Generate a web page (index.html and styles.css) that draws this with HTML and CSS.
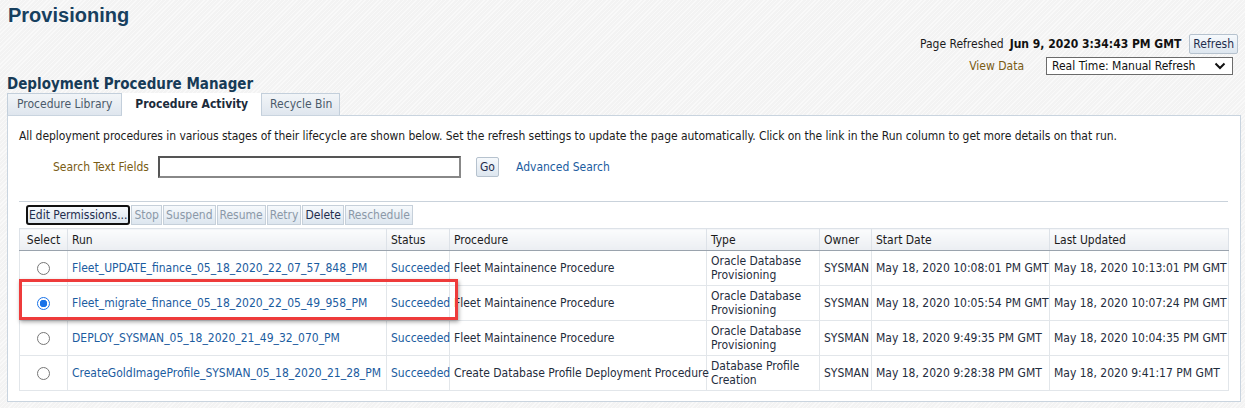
FILE: index.html
```html
<!DOCTYPE html>
<html>
<head>
<meta charset="utf-8">
<link rel="stylesheet" href="styles.css">
</head>
<body>
<div class="page">
  <h1 class="title">Provisioning</h1>
  <div class="refresh-area">
    <div class="refresh-row">
      <span class="lbl-dark">Page Refreshed</span>
      <span class="stamp">Jun 9, 2020 3:34:43 PM GMT</span>
      <button class="btn btn-refresh">Refresh</button>
    </div>
    <div class="view-row">
      <span class="lbl-brown">View Data</span>
      <div class="select">
        <span>Real Time: Manual Refresh</span>
        <svg width="12" height="8" viewBox="0 0 12 8"><path d="M1.5 1.5 L6 6 L10.5 1.5" fill="none" stroke="#111" stroke-width="2"/></svg>
      </div>
    </div>
  </div>
  <h2 class="subtitle">Deployment Procedure Manager</h2>
  <div class="tabs">
    <div class="tab">Procedure Library</div>
    <div class="tab active">Procedure Activity</div>
    <div class="tab">Recycle Bin</div>
  </div>
  <div class="panel">
    <p class="desc">All deployment procedures in various stages of their lifecycle are shown below. Set the refresh settings to update the page automatically. Click on the link in the Run column to get more details on that run.</p>
    <div class="search-row">
      <span class="lbl-brown">Search Text Fields</span>
      <div class="input"></div>
      <button class="btn btn-go">Go</button>
      <a class="link adv">Advanced Search</a>
    </div>
    <div class="sep"></div>
    <div class="toolbar">
      <button class="btn tb focus">Edit Permissions...</button>
      <button class="btn tb dis">Stop</button>
      <button class="btn tb dis">Suspend</button>
      <button class="btn tb dis">Resume</button>
      <button class="btn tb dis">Retry</button>
      <button class="btn tb">Delete</button>
      <button class="btn tb dis">Reschedule</button>
    </div>
    <div class="table-wrap">
      <table class="grid">
        <colgroup>
          <col class="c-sel"><col class="c-run"><col class="c-status"><col class="c-proc"><col class="c-type"><col class="c-owner"><col class="c-start"><col class="c-upd">
        </colgroup>
        <thead>
          <tr><th>Select</th><th>Run</th><th>Status</th><th>Procedure</th><th>Type</th><th>Owner</th><th>Start Date</th><th>Last Updated</th></tr>
        </thead>
        <tbody>
          <tr>
            <td class="sel"><span class="radio"></span></td>
            <td><a class="link">Fleet_UPDATE_finance_05_18_2020_22_07_57_848_PM</a></td>
            <td><a class="link">Succeeded</a></td>
            <td>Fleet Maintainence Procedure</td>
            <td>Oracle Database Provisioning</td>
            <td>SYSMAN</td>
            <td>May 18, 2020 10:08:01 PM GMT</td>
            <td>May 18, 2020 10:13:01 PM GMT</td>
          </tr>
          <tr>
            <td class="sel"><span class="radio on"></span></td>
            <td><a class="link">Fleet_migrate_finance_05_18_2020_22_05_49_958_PM</a></td>
            <td><a class="link">Succeeded</a></td>
            <td>Fleet Maintainence Procedure</td>
            <td>Oracle Database Provisioning</td>
            <td>SYSMAN</td>
            <td>May 18, 2020 10:05:54 PM GMT</td>
            <td>May 18, 2020 10:07:24 PM GMT</td>
          </tr>
          <tr>
            <td class="sel"><span class="radio"></span></td>
            <td><a class="link">DEPLOY_SYSMAN_05_18_2020_21_49_32_070_PM</a></td>
            <td><a class="link">Succeeded</a></td>
            <td>Fleet Maintainence Procedure</td>
            <td>Oracle Database Provisioning</td>
            <td>SYSMAN</td>
            <td>May 18, 2020 9:49:35 PM GMT</td>
            <td>May 18, 2020 10:04:35 PM GMT</td>
          </tr>
          <tr>
            <td class="sel"><span class="radio"></span></td>
            <td><a class="link">CreateGoldImageProfile_SYSMAN_05_18_2020_21_28_PM</a></td>
            <td><a class="link">Succeeded</a></td>
            <td>Create Database Profile Deployment Procedure</td>
            <td>Database Profile Creation</td>
            <td>SYSMAN</td>
            <td>May 18, 2020 9:28:38 PM GMT</td>
            <td>May 18, 2020 9:41:17 PM GMT</td>
          </tr>
        </tbody>
      </table>
      <div class="highlight"></div>
    </div>
  </div>
</div>
</body>
</html>
```
FILE: styles.css
```css
html, body { margin: 0; padding: 0; }
body {
  background-color: #f3f3f3;
  background-image: repeating-linear-gradient(135deg, rgba(255,255,255,0.5) 0 1px, rgba(0,0,0,0) 1px 3px);
  font-family: "DejaVu Sans Condensed", "DejaVu Sans", sans-serif;
  font-size: 12px;
  color: #1f2d3d;
}
.page { padding: 0 4px 0 7px; height: 408px; box-sizing: border-box; }
.title {
  margin: 0; padding: 3px 0 0 1px;
  font-family: "Liberation Sans", Arial, sans-serif;
  font-size: 20px; font-weight: bold; color: #17405f; line-height: 24px;
}
.refresh-area { display: flex; flex-direction: column; align-items: flex-end; gap: 3px; margin-top: 7px; padding-right: 3px; }
.refresh-row { display: flex; align-items: center; gap: 6px; height: 20px; }
.lbl-dark { color: #1b1b1b; }
.stamp { font-weight: bold; color: #111; margin-right: 2px; }
.btn {
  font-family: "DejaVu Sans Condensed", "DejaVu Sans", sans-serif;
  font-size: 12px; color: #1f2d4d;
  border: 1px solid #b6c2ce; border-radius: 2px;
  background: linear-gradient(#f6f9fc, #dde6ef);
  padding: 0 3px; height: 20px; margin: 0;
}
.btn-refresh { height: 20px; }
.view-row { display: flex; align-items: center; gap: 22px; height: 18px; margin-right: 5px; }
.lbl-brown { color: #7a5c14; }
.select {
  width: 174px; height: 16px; border: 1px solid #6b6b6b; background: #fff;
  display: flex; align-items: center; justify-content: space-between; padding: 0 6px 0 5px;
  color: #111; box-sizing: content-box;
}
.subtitle {
  margin: 0;
  font-size: 15px; font-weight: bold; color: #173b57; line-height: 18px;
}
.tabs { display: flex; height: 22px; margin-top: 0; }
.tab {
  padding: 0 9px; line-height: 21px; border: 1px solid #c3cfdb; border-bottom: none;
  background: linear-gradient(#f2f5f8, #dfe6ee); color: #4a5a6a; margin-right: 0;
}
.tab:last-child { padding: 0 7px 0 8px; }
.tab.active { background: #fff; color: #1b2b3b; font-weight: bold; padding: 0 12px; position: relative; z-index: 1; border-color: #fff; height: 23px; }
.panel {
  background: #fff; border: 1px solid #c9d4df; margin-right: 0;
  padding: 0 12px 10px 11px; width: 1234px; box-sizing: border-box;
}
.desc { margin: 12px 0 0 0; color: #1b1b1b; line-height: 16px; letter-spacing: -0.05px; }
.search-row { display: flex; align-items: center; margin-top: 12px; padding-left: 34px; height: 22px; }
.search-row .lbl-brown { margin-right: 9px; }
.input { width: 299px; height: 18px; border: 2px solid #333; border-color: #555 #888 #888 #555; background: #fff; }
.btn-go { margin-left: 15px; padding: 0 3px; }
.link { color: #1b5ca0; text-decoration: none; }
.adv { margin-left: 17px; }
.sep { height: 1px; background: #c9d2db; margin: 23px 0 0 0; }
.toolbar { display: flex; margin-top: 3px; padding-left: 7px; height: 20px; }
.tb { padding: 0 2px; height: 20px; border-radius: 0; border-color: #c6d0da; margin-right: 1px; }
.tb.dis { color: #8b99a8; }
.tb.focus { border: 2px solid #111; border-radius: 3px; padding: 0 1px; }
.table-wrap { position: relative; margin-top: 3px; }
.grid { border-collapse: collapse; table-layout: fixed; width: 1209px; }
.c-sel { width: 48px; } .c-run { width: 319px; } .c-status { width: 63px; } .c-proc { width: 257px; }
.c-type { width: 113px; } .c-owner { width: 52px; } .c-start { width: 178px; } .c-upd { width: 179px; }
.grid th {
  background: linear-gradient(#fbfcfd, #ebeef2); font-weight: normal; text-align: left;
  height: 21px; padding: 0 4px; border: 1px solid #dde2e8; border-bottom: 1px solid #9aa3ad;
  border-left: 1px solid #9aa3ad; color: #1b1b1b; white-space: nowrap;
}
.grid th:first-child { text-align: center; border-left-color: #dde2e8; }
.grid td {
  height: 34px; padding: 0 4px; border: 1px solid #e2e6ea; color: #1f2d3d; line-height: 14px; white-space: nowrap;
}
.grid td:nth-child(5) { white-space: normal; }
.grid td.sel { text-align: center; }
.radio {
  display: inline-block; width: 11px; height: 11px; border: 1px solid #777; border-radius: 50%; background: #fff; vertical-align: middle;
}
.radio.on { border-color: #1a73e8; background: radial-gradient(circle, #1a73e8 0 3.5px, #fff 4px); }
.highlight {
  position: absolute; left: 0; top: 51px; width: 433px; height: 35px;
  border: 3px solid #ee3b3b; box-shadow: 1px 2px 4px rgba(0,0,0,0.35);
  pointer-events: none;
}
```
